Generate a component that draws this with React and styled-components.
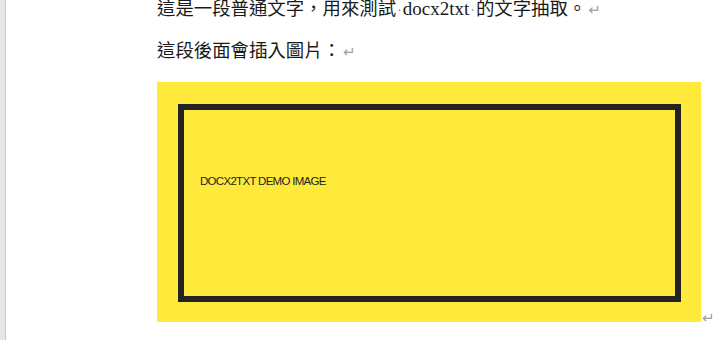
import React from 'react'
import styled, { createGlobalStyle } from 'styled-components'

const GlobalStyle = createGlobalStyle`
  html, body {
    margin: 0;
    padding: 0;
    background: #ffffff;
    overflow: hidden;
  }
`

const Window = styled.div`
  display: flex;
  width: 720px;
  height: 340px;
  overflow: hidden;
  background: #ffffff;
`

const Gutter = styled.div`
  width: 5px;
  flex: none;
  background: #e6e6e6;
  border-right: 1px solid #c6c6c6;
`

const Page = styled.div`
  flex: 1;
  padding-left: 151px;
  display: flex;
  flex-direction: column;
`

const Para = styled.p`
  margin: 0;
  height: ${(p) => p.height}px;
  margin-top: ${(p) => p.offset || 0}px;
  font-family: 'Noto Sans CJK TC', 'Liberation Serif', serif;
  font-size: 18.4px;
  line-height: 24px;
  color: #1a1a1a;
  white-space: nowrap;
`

const Latin = styled.span`
  font-family: 'Liberation Serif', serif;
  font-size: 19px;
`

const Space = styled.span`
  font-family: 'Liberation Serif', serif;
  color: #8a8a8a;
  font-size: 14px;
  padding: 0 1px;
`

const Mark = styled.span`
  font-family: 'DejaVu Sans', sans-serif;
  color: #a0a0a0;
  font-size: 15px;
  margin-left: 2px;
`

const Figure = styled.div`
  display: flex;
  align-items: flex-end;
`

const Picture = styled.div`
  width: 544px;
  height: 240px;
  box-sizing: border-box;
  background: #ffea3b;
  padding: 22px 20px 20px 21px;
`

const Frame = styled.div`
  height: 100%;
  box-sizing: border-box;
  border: 6px solid #222222;
  display: flex;
  align-items: flex-start;
  padding: 64px 0 0 16px;
`

const Caption = styled.span`
  font-family: 'Liberation Sans', sans-serif;
  font-size: 11.5px;
  line-height: 14px;
  letter-spacing: -0.7px;
  color: #222222;
`

const FigMark = styled(Mark)`
  margin-left: 1px;
  line-height: 18px;
  margin-bottom: -5px;
`

export default function App() {
  return (
    <Window>
      <GlobalStyle />
      <Gutter />
      <Page>
        <Para offset={-5} height={42}>
          這是一段普通文字，用來測試<Space>·</Space>
          <Latin>docx2txt</Latin>
          <Space>·</Space>的文字抽取。<Mark>↵</Mark>
        </Para>
        <Para height={45}>
          這段後面會插入圖片：<Mark>↵</Mark>
        </Para>
        <Figure>
          <Picture>
            <Frame>
              <Caption>DOCX2TXT DEMO IMAGE</Caption>
            </Frame>
          </Picture>
          <FigMark>↵</FigMark>
        </Figure>
      </Page>
    </Window>
  )
}
